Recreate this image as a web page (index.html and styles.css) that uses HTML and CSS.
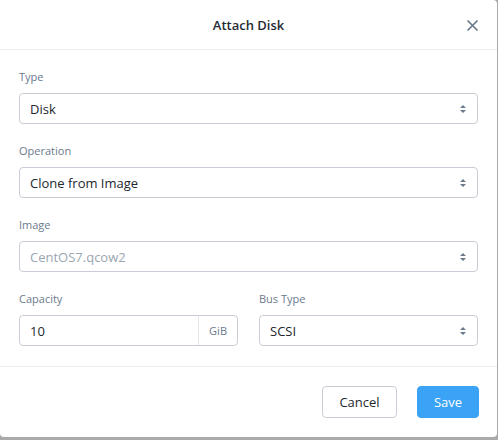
FILE: index.html
```html
<!DOCTYPE html>
<html>
<head>
<meta charset="utf-8">
<link rel="stylesheet" href="styles.css">
</head>
<body>
<div class="modal">
  <div class="header">
    <div class="title">Attach Disk</div>
    <svg class="close" width="11" height="11" viewBox="0 0 11 11"><path d="M1 1L10 10M10 1L1 10" stroke="#6a7a8c" stroke-width="1.7" stroke-linecap="round"/></svg>
  </div>
  <div class="body">
    <div class="field">
      <label class="label">Type</label>
      <div class="select"><span>Disk</span><svg class="arrows" width="6" height="8" viewBox="0 0 6 8"><path d="M3 0L6 3H0Z M3 8L0 5H6Z" fill="#6a7a8c"/></svg></div>
    </div>
    <div class="field">
      <label class="label">Operation</label>
      <div class="select"><span>Clone from Image</span><svg class="arrows" width="6" height="8" viewBox="0 0 6 8"><path d="M3 0L6 3H0Z M3 8L0 5H6Z" fill="#6a7a8c"/></svg></div>
    </div>
    <div class="field">
      <label class="label">Image</label>
      <div class="select disabled"><span>CentOS7.qcow2</span><svg class="arrows" width="6" height="8" viewBox="0 0 6 8"><path d="M3 0L6 3H0Z M3 8L0 5H6Z" fill="#6a7a8c"/></svg></div>
    </div>
    <div class="row">
      <div class="field">
        <label class="label">Capacity</label>
        <div class="input-group"><span class="value">10</span><span class="addon">GiB</span></div>
      </div>
      <div class="field">
        <label class="label">Bus Type</label>
        <div class="select"><span>SCSI</span><svg class="arrows" width="6" height="8" viewBox="0 0 6 8"><path d="M3 0L6 3H0Z M3 8L0 5H6Z" fill="#6a7a8c"/></svg></div>
      </div>
    </div>
  </div>
  <div class="footer">
    <button class="btn cancel">Cancel</button>
    <button class="btn save">Save</button>
  </div>
</div>
<div class="behind">BIOS Mode</div>
</body>
</html>
```
FILE: styles.css
```css
html, body {
  margin: 0;
  padding: 0;
  background: #a9aaac;
  font-family: "Open Sans", "Liberation Sans", sans-serif;
  overflow: hidden;
  height: 440px;
}
.modal {
  width: 497px;
  height: 437px;
  background: #fff;
  border-radius: 0 4px 4px 4px;
  display: flex;
  flex-direction: column;
  box-sizing: border-box;
}
.header {
  height: 49px;
  border-bottom: 1px solid #ebedf0;
  display: flex;
  align-items: center;
  justify-content: center;
  position: relative;
  flex: none;
}
.title {
  font-size: 13px;
  font-weight: 600;
  color: #262b33;
}
.close {
  position: absolute;
  right: 19px;
  top: 20px;
}
.body {
  padding: 19px 19px 20px 19px;
  display: flex;
  flex-direction: column;
  gap: 19px;
  border-bottom: 1px solid #ebedf0;
  flex: none;
}
.field {
  display: flex;
  flex-direction: column;
  gap: 8px;
  flex: 1;
}
.label {
  font-size: 11px;
  line-height: 16px;
  color: #6b7a8d;
}
.select, .input-group {
  height: 31px;
  border: 1px solid #c9ced6;
  border-radius: 4px;
  box-sizing: border-box;
  display: flex;
  align-items: center;
  font-size: 13px;
  color: #22272e;
}
.select {
  padding: 0 11px 0 10px;
  justify-content: space-between;
}
.select.disabled span {
  color: #9aa6b2;
}
.arrows {
  display: block;
}
.row {
  display: flex;
  gap: 21px;
}
.input-group .value {
  flex: 1;
  padding-left: 10px;
}
.input-group .addon {
  border-left: 1px solid #e3e6ea;
  height: 100%;
  display: flex;
  align-items: center;
  padding: 0 10px 0 10px;
  font-size: 11px;
  color: #6b7a8d;
}
.footer {
  flex: 1;
  display: flex;
  justify-content: flex-end;
  align-items: flex-start;
  padding: 19px 18px 0 0;
  gap: 20px;
}
.btn {
  height: 32px;
  border-radius: 4px;
  font-family: inherit;
  font-size: 13px;
  box-sizing: border-box;
  cursor: pointer;
}
.cancel {
  width: 75px;
  background: #fff;
  border: 1px solid #c9ced6;
  color: #22272e;
}
.save {
  width: 62px;
  background: #3aa3f5;
  border: 1px solid #3aa3f5;
  color: #fff;
}
.behind {
  padding-left: 42px;
  margin-top: 1px;
  font-size: 13px;
  line-height: 16px;
  color: #2a2b2d;
}
```
